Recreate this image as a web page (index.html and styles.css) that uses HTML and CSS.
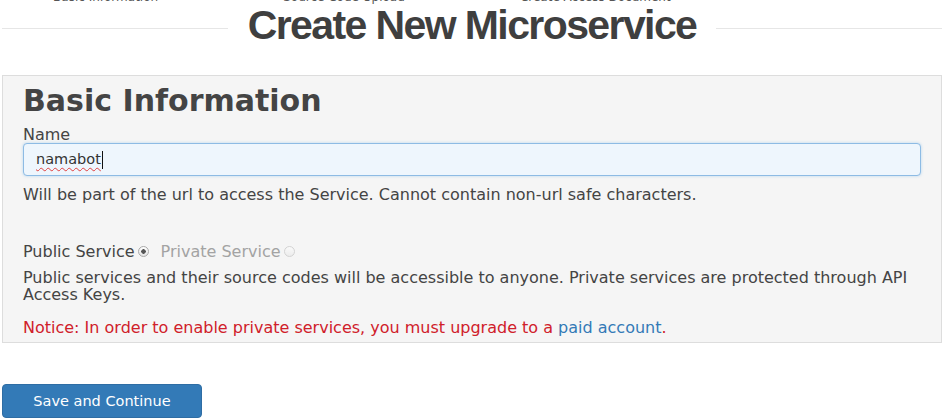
FILE: index.html
```html
<!DOCTYPE html>
<html lang="en">
<head>
<meta charset="utf-8">
<title>Create New Microservice</title>
<link rel="stylesheet" href="styles.css">
</head>
<body>
<div class="page">
  <header class="title-bar">
    <div class="steps">
      <span class="step step-1"><span class="step-dot">•</span>Basic Information</span>
      <span class="step step-2"><span class="step-dot">•</span>Source Code Upload</span>
      <span class="step step-3"><span class="step-dot">•</span>Create Access Document</span>
    </div>
    <span class="rule"></span>
    <h1 class="title">Create New Microservice</h1>
    <span class="rule"></span>
  </header>

  <section class="panel">
    <h2 class="panel-title">Basic Information</h2>
    <label class="field-label">Name</label>
    <div class="text-input" role="textbox"><span class="misspelled">namabot</span><span class="caret"></span></div>
    <p class="help">Will be part of the url to access the Service. Cannot contain non-url safe characters.</p>

    <div class="radio-row">
      <span class="radio-label">Public Service</span><span class="radio checked"></span>
      <span class="radio-label disabled">Private Service</span><span class="radio disabled"></span>
    </div>
    <p class="desc">Public services and their source codes will be accessible to anyone. Private services are protected through API Access Keys.</p>
    <p class="notice">Notice: In order to enable private services, you must upgrade to a <a class="link" href="#">paid account</a>.</p>
  </section>

  <button class="btn-primary" type="button">Save and Continue</button>
</div>
</body>
</html>
```
FILE: styles.css
```css
html, body {
  margin: 0;
  padding: 0;
  background: #ffffff;
}

body {
  font-family: "DejaVu Sans", "Noto Sans", sans-serif;
  font-size: 16px;
  color: #444444;
}

.page {
  padding: 0 10px 0 2px;
}

.title-bar {
  position: relative;
  display: flex;
  align-items: flex-start;
  height: 46px;
  padding-top: 4px;
  margin-bottom: 25px;
}

.steps {
  position: absolute;
  top: 0;
  left: 0;
  right: 0;
  height: 4px;
  overflow: hidden;
  display: flex;
}

.step {
  margin-top: -10px;
  font-size: 12px;
  line-height: 14px;
  color: #555;
  white-space: nowrap;
}

.step-1 { margin-left: 36px; }
.step-2 { margin-left: 110px; }
.step-3 { margin-left: 100px; }

.step-dot {
  margin-right: 8px;
  color: #bbb;
}

.rule {
  flex: 1;
  margin-top: 24px;
  border-top: 1px solid #e6e6e6;
}

.title {
  position: relative;
  margin: 0;
  padding: 0 20px;
  background: #ffffff;
  font-family: "Liberation Sans", Arial, sans-serif;
  font-weight: bold;
  font-size: 41px;
  line-height: 42px;
  letter-spacing: -1.6px;
  color: #3f3f3f;
}

.panel {
  background: #f5f5f5;
  border: 1px solid #dddddd;
  padding: 6px 20px 6px;
}

.panel-title {
  margin: 0;
  font-family: "DejaVu Sans", sans-serif;
  font-weight: 700;
  font-size: 30px;
  line-height: 37px;
  color: #444444;
}

.field-label {
  display: block;
  margin-top: 7px;
  line-height: 17px;
}

.text-input {
  margin-top: 0;
  box-sizing: border-box;
  height: 33px;
  padding: 0 12px;
  display: flex;
  align-items: center;
  background: #eef6fd;
  border: 1px solid #8dbbe4;
  border-radius: 4px;
  box-shadow: 0 0 3px rgba(102, 175, 233, 0.45);
  color: #333;
  font-size: 14.5px;
  line-height: 17px;
}

.misspelled {
  text-decoration: underline wavy #e04040;
  text-decoration-thickness: 1px;
  text-underline-offset: 3px;
}

.caret {
  display: inline-block;
  width: 1px;
  height: 18px;
  background: #111;
  margin-left: 1px;
}

.help {
  margin: 10px 0 0;
  line-height: 17px;
}

.radio-row {
  margin-top: 40px;
  display: flex;
  align-items: baseline;
  line-height: 17px;
}

.radio-label.disabled {
  color: #a3a3a3;
  margin-left: 12px;
}

.radio {
  box-sizing: border-box;
  display: inline-block;
  width: 11px;
  height: 11px;
  margin-left: 3px;
  border-radius: 50%;
  border: 1px solid #a9a9a9;
  background: radial-gradient(circle at 50% 50%, #555 0, #555 2px, transparent 2.5px), linear-gradient(#ffffff, #e3e3e3);
}

.radio.disabled {
  border-color: #d3d3d3;
  background: linear-gradient(#fafafa, #ececec);
}

.desc {
  margin: 10px 0 0;
  line-height: 16.5px;
}

.notice {
  margin: 16px 0 0;
  line-height: 17px;
  color: #d0202a;
}

.link {
  color: #337ab7;
  text-decoration: none;
}

.btn-primary {
  display: block;
  margin-top: 41px;
  width: 200px;
  height: 34px;
  padding: 0;
  font-family: "DejaVu Sans", sans-serif;
  font-size: 14.5px;
  line-height: 20px;
  color: #ffffff;
  background: #337ab7;
  border: 1px solid #2e6da4;
  border-radius: 4px;
}
```
